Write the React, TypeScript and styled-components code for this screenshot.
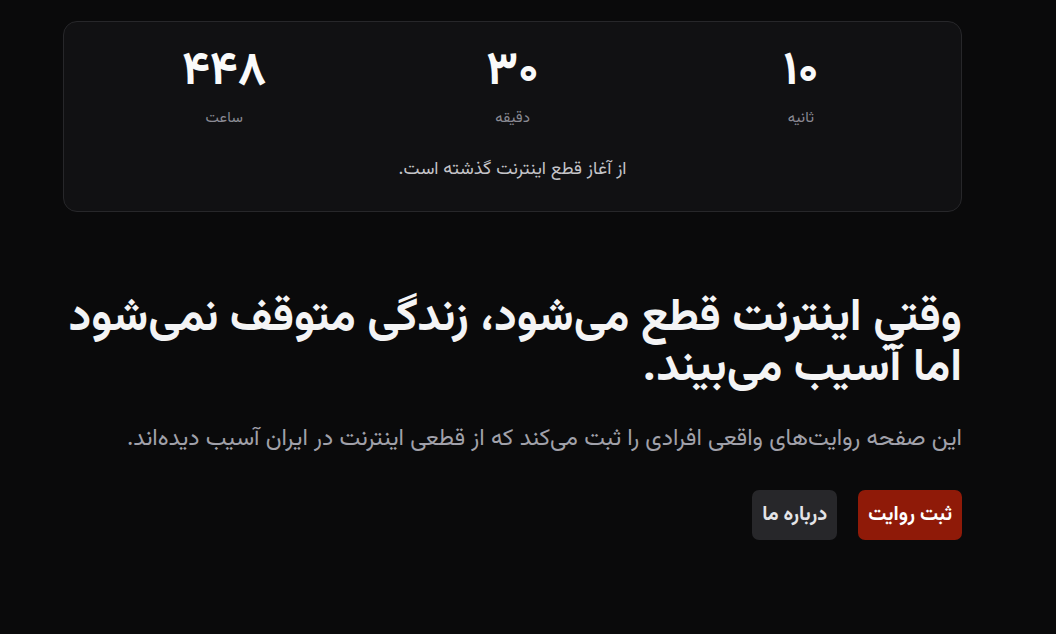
import React from 'react';
import styled, { createGlobalStyle } from 'styled-components';

const units = [
  { value: '۱۰', label: 'ثانیه' },
  { value: '۳۰', label: 'دقیقه' },
  { value: '۴۴۸', label: 'ساعت' },
];

const App = () => {
  return (
    <>
      <GlobalStyle />
      <Page dir="rtl">
        <Container>
          <CounterCard>
            <UnitGrid>
              {units.map((u) => (
                <Unit key={u.label}>
                  <UnitValue>{u.value}</UnitValue>
                  <UnitLabel>{u.label}</UnitLabel>
                </Unit>
              ))}
            </UnitGrid>
            <Caption>از آغاز قطع اینترنت گذشته است.</Caption>
          </CounterCard>

          <Hero>
            <Title>
              <TitleLine>وقتي اینترنت قطع می‌شود، زندگی متوقف نمی‌شود</TitleLine>
              <TitleLine>اما آسیب می‌بیند.</TitleLine>
            </Title>
            <Lead>
              این صفحه روایت‌های واقعی افرادی را ثبت می‌کند که از قطعی اینترنت در ایران آسیب دیده‌اند.
            </Lead>
            <Actions>
              <Button $variant="primary">ثبت روایت</Button>
              <Button $variant="secondary">درباره ما</Button>
            </Actions>
          </Hero>
        </Container>
      </Page>
    </>
  );
};

export default App;

const GlobalStyle = createGlobalStyle`
  * {
    box-sizing: border-box;
  }

  html,
  body {
    margin: 0;
    padding: 0;
    background-color: #0a0a0b;
  }

  body {
    font-family: 'Vazirmatn', 'Noto Sans Arabic', 'Noto Sans Arabic UI', 'Noto Naskh Arabic', 'Noto Sans', 'DejaVu Sans', sans-serif;
    color: #f4f4f5;
  }
`;

const Page = styled.main`
  min-height: 634px;
  background-color: #0a0a0b;
  padding: 21px 94px 40px 63px;
`;

const Container = styled.div`
  width: 899px;
  display: flex;
  flex-direction: column;
`;

const CounterCard = styled.section`
  height: 191px;
  padding: 23px 32px 0;
  border: 1px solid #27272a;
  border-radius: 14px;
  background-color: #111113;
  display: flex;
  flex-direction: column;
  align-items: center;
`;

const UnitGrid = styled.div`
  width: 100%;
  display: grid;
  grid-template-columns: repeat(3, 1fr);
  gap: 32px;
`;

const Unit = styled.div`
  display: flex;
  flex-direction: column;
  align-items: center;
`;

const UnitValue = styled.span`
  font-size: 47px;
  font-weight: 700;
  line-height: 56px;
  color: #fafafa;
`;

const UnitLabel = styled.span`
  margin-top: 7px;
  font-size: 15px;
  line-height: 22px;
  color: #8a8a93;
`;

const Caption = styled.p`
  margin: 27px 0 0;
  font-size: 18px;
  line-height: 26px;
  color: #c4c4c8;
`;

const Hero = styled.section`
  margin-top: 82px;
  display: flex;
  flex-direction: column;
`;

const Title = styled.h1`
  margin: 0;
  font-size: 45.6px;
  font-weight: 700;
  line-height: 50px;
  color: #f4f4f5;
`;

const TitleLine = styled.span`
  display: block;
  white-space: nowrap;
`;

const Lead = styled.p`
  margin: 30px 0 0;
  font-size: 23.3px;
  line-height: 32px;
  color: #a1a1aa;
`;

const Actions = styled.div`
  margin-top: 34px;
  display: flex;
  gap: 21px;
`;

const Button = styled.button<{ $variant: 'primary' | 'secondary' }>`
  height: 50px;
  padding: 0 10px;
  border: none;
  border-radius: 7px;
  font-family: inherit;
  font-size: 20px;
  font-weight: 700;
  color: ${({ $variant }) => ($variant === 'primary' ? '#ffffff' : '#e4e4e7')};
  background-color: ${({ $variant }) => ($variant === 'primary' ? '#8f1a08' : '#27272a')};
  cursor: pointer;
`;
